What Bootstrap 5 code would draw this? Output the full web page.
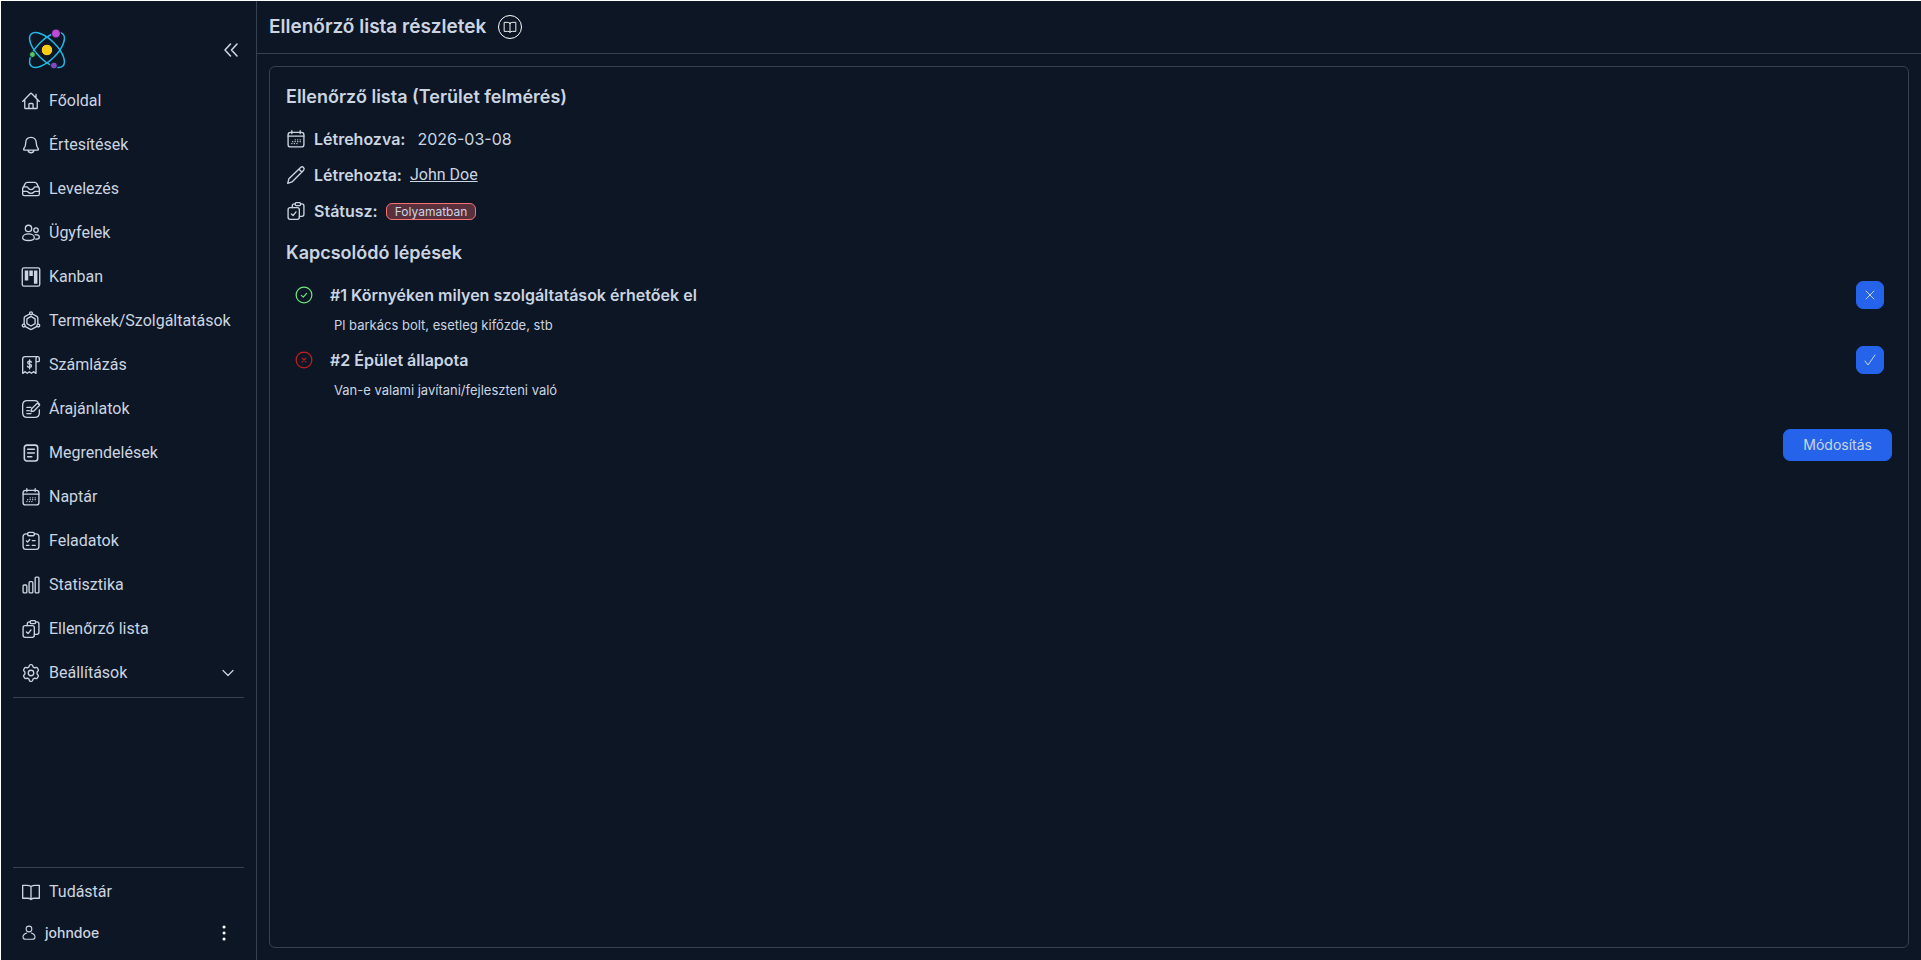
<!DOCTYPE html>
<html lang="hu" data-bs-theme="dark">
<head>
<meta charset="utf-8">
<meta name="viewport" content="width=device-width, initial-scale=1">
<title>Ellenőrző lista részletek</title>
<link href="https://cdn.jsdelivr.net/npm/bootstrap@5.3.0/dist/css/bootstrap.min.css" rel="stylesheet">
<style>
  :root { --ink: #cbd5e1; --line: #374151; --page: #0d1624; --accent: #2563eb; }
  body {
    font-family: Inter, "Liberation Sans", sans-serif; font-size: 16px; line-height: 24px;
    color: var(--ink); background: var(--page);
    border-top: 1px solid #fff; border-left: 1px solid #fff;
  }
  a { color: inherit; }
  h1, h2, h3 { color: var(--ink); }
  svg { fill: none; stroke: currentColor; stroke-width: 1.6; stroke-linecap: round; stroke-linejoin: round; flex: none; }
  .wrap { min-height: calc(100vh - 1px); }
  .ico { width: 20px; height: 20px; }
  .plain { background: none; border: 0; color: inherit; padding: 0; display: inline-flex; }
  .side { width: 256px; border-right: 1px solid var(--line); padding: 24px 12px 8px; }
  .side-head { padding: 0 5px 0 12px; height: 50px; }
  .menu-item { padding: 0 8px; height: 44px; gap: 8px; color: var(--ink); text-decoration: none; text-align: left; }
  .menu-item, .meta a { font-family: Roboto, Inter, sans-serif; }
  .rule { border-top: 1px solid var(--line); margin: 2px 0; }
  .user-row { height: 38px; padding: 0 10px 0 8px; font-size: 14px; font-weight: 500; }
  .topbar { height: 53px; padding: 0 12px; gap: 12px; border-bottom: 1px solid var(--line); }
  .topbar h1 { font-size: 19px; line-height: 28px; font-weight: 600; }
  .help-ring { width: 24px; height: 24px; border: 1px solid #fff; }
  .panel { margin: 12px; padding: 16px; border: 1px solid var(--line); border-radius: 6px; }
  .panel h2 { font-size: 18px; line-height: 28px; font-weight: 600; margin: 0 0 10px; }
  .panel .steps-title { margin: 10px 0 14px; }
  .meta { gap: 8px; height: 36px; }
  .meta strong, .step h3 { font-weight: 600; }
  .step h3 { font-size: 16px; line-height: 28px; }
  .status-chip { font-size: 12px; line-height: 15px; padding: 0 8px; border: 1px solid #f87171; border-radius: 6px; background: #5a303d; }
  .step { padding: 0 8px 0 9px; height: 65px; }
  .step-mark { width: 35px; }
  .step p { font-size: 13px; line-height: 20px; padding: 6px 0 0 4px; }
  .btn-accent { --bs-btn-bg: var(--accent); --bs-btn-border-color: var(--accent); --bs-btn-color: #cbd5e1; --bs-btn-hover-bg: #1d4ed8; --bs-btn-hover-color: #fff; border-radius: 7px; }
  .btn-square { width: 28px; height: 28px; padding: 0; }
  .panel-foot { margin-top: 18px; }
  .btn-edit { font-size: 14px; line-height: 20px; padding: 5px 19px; }
</style>
</head>
<body>
<svg class="d-none" aria-hidden="true">
  <symbol id="i-home" viewBox="0 0 24 24"><path d="M2 12.500 11 3.200q1-1 2 0l9 9.300M4.500 10.500V20q0 1 1 1h13q1 0 1-1v-9.500M9.500 21v-5q0-1 1-1h3q1 0 1 1v5M18 8V4"/></symbol>
  <symbol id="i-bell" viewBox="0 0 24 24"><path d="M12 2.800c-4 0-6.300 2.700-6.300 6.400 0 4-1 5.400-2.200 7-.8 1.100-.3 2 1 2h15c1.300 0 1.800-.9 1-2-1.200-1.600-2.200-3-2.200-7 0-3.700-2.300-6.400-6.300-6.400ZM8.500 18.500c.5 3.700 6.500 3.700 7 0"/></symbol>
  <symbol id="i-inbox" viewBox="0 0 24 24"><path d="M2 11.500 5 5.500Q5.800 4 7.500 4h9Q18.200 4 19 5.500l3 6V18q0 2-2 2H4q-2 0-2-2ZM2 11.500q0-2 2-2h2.500q1.500 0 2 1.200 1 2 3.500 2t3.500-2q.5-1.200 2-1.200H20q2 0 2 2M2 14.800h5q1 0 1.500.8 1.200 1.700 3.500 1.700t3.500-1.700q.5-.8 1.500-.8h5"/></symbol>
  <symbol id="i-users" viewBox="0 0 24 24"><circle cx="9" cy="6.500" r="3.800"/><circle cx="18" cy="8.500" r="2.700"/><path d="M9 13c-4 0-7 2-7 4.700 0 2.200 2 3.300 7 3.300s7-1.100 7-3.300C16 15 13 13 9 13Z"/><path d="M17 14c3 0 5 1.200 5 3 0 1.500-1.500 2.300-4.500 2.300"/></symbol>
  <symbol id="i-kanban" viewBox="0 0 24 24"><rect x="1.500" y="1" width="21" height="22" rx="2"/><path d="M4.500 4.200h4.200v12H4.500ZM10 4.200h4.200v6.500H10ZM15.500 4.200h4.200V20h-4.200Z" fill="currentColor" stroke="none"/></symbol>
  <symbol id="i-hex" viewBox="0 0 24 24"><circle cx="12" cy="2.800" r="1.700"/><circle cx="3.200" cy="17.500" r="1.700"/><circle cx="20.800" cy="17.500" r="1.700"/><path d="M10.300 3.600 5 6.500q-1.200.7-1.200 2v7.200M13.700 3.600 19 6.500q1.200.7 1.200 2v7.200M4.800 18.500l6 3.300q1.200.7 2.400 0l6-3.300M12 6.500l4.900 2.900v5.800L12 18l-4.900-2.800V9.400Z"/></symbol>
  <symbol id="i-bill" viewBox="0 0 24 24"><path d="M20 2H5Q2 2 2 5v17l3-2 2.500 2 2.500-2 2.500 2 2.500-2 3 2V4.500Q18 2 20 2t2 2.500V7q0 1-1 1h-3"/><path d="M12.500 8.700Q12 7.500 10.300 7.500 8 7.500 8 9.200t2.300 1.900q2.300.3 2.300 2t-2.300 1.800q-2 0-2.500-1.400M10.300 6v10.500"/></symbol>
  <symbol id="i-draft" viewBox="0 0 24 24"><path d="M21 6.500Q20.500 2 16.500 2H7.500Q2 2 2 7.500v9Q2 22 7.500 22h9q5.500 0 5.500-5.500V13M7 10h5M7 14h3"/><path d="m12 15 .7-3.300 6.500-6.200q1.300-1 2.500.1t0 2.500l-6.200 6.300ZM7 17.500h5"/></symbol>
  <symbol id="i-doc" viewBox="0 0 24 24"><rect x="4" y="2.500" width="16" height="19" rx="3" stroke-width="1.900"/><path d="M8 7.500h8M8 12h8M8 16.500h5" stroke-width="1.900"/></symbol>
  <symbol id="i-cal" viewBox="0 0 24 24"><rect x="2.500" y="4" width="19" height="17.500" rx="3"/><path d="M7 2v3.500M17 2v3.500M2.500 8.500h19M11 13h.1M14 13h.1M17 13h.1M8 15.200h.1M11 15.200h.1M14 15.200h.1M17 15.200h.1M7 17.500h.1M10 17.500h.1M13 17.500h.1"/></symbol>
  <symbol id="i-tasks" viewBox="0 0 24 24"><path d="M8 3.500H6q-3.500 0-3.500 3.500v11.500Q2.500 22 6 22h12q3.500 0 3.500-3.500V7q0-3.500-3.500-3.500h-2"/><rect x="8" y="1.700" width="8" height="4" rx="1.500"/><path d="m6.500 12 1.400 1.200 2.600-3M13.500 11.500H17M6.500 17.300h3M13.500 17.300H17"/></symbol>
  <symbol id="i-stats" viewBox="0 0 24 24"><rect x="2.500" y="12" width="4.500" height="9.500" rx="1.200"/><rect x="9.700" y="8" width="4.500" height="13.500" rx="1.200"/><rect x="17" y="2.500" width="4.500" height="19" rx="1.200"/></symbol>
  <symbol id="i-check-list" viewBox="0 0 24 24"><rect x="2.500" y="8" width="13.500" height="14" rx="2.500"/><path d="M7.500 8V6q0-2.500 2.500-2.500h1M17.500 3.500H19q2.500 0 2.500 2.500v10q0 2.500-2.500 2.500h-3M6.500 15.500l2 2 3.500-4.500"/><rect x="11" y="2" width="6.500" height="3.500" rx="1.300"/></symbol>
  <symbol id="i-gear" viewBox="0 0 24 24"><circle cx="12" cy="12" r="3.300"/><path d="M10 3.200Q10.300 2 11.500 2h1q1.200 0 1.500 1.200l.4 1.500 2 1.100 1.500-.4q1.200-.3 1.800.7l1 1.700q.6 1-.3 1.900l-1.100 1.100v2.400l1.100 1.100q.9.900.3 1.900l-1 1.700q-.6 1-1.800.7l-1.500-.4-2 1.100-.4 1.500Q13.700 22 12.500 22h-1q-1.200 0-1.500-1.200l-.4-1.500-2-1.100-1.500.4q-1.200.3-1.800-.7l-1-1.700q-.6-1 .3-1.900l1.100-1.100v-2.400L3.600 9.700Q2.700 8.800 3.300 7.800l1-1.700q.6-1 1.800-.7l1.500.4 2-1.100Z"/></symbol>
  <symbol id="i-book" viewBox="0 0 24 24"><path d="M12 5.500Q10 4 7 4H2v15.500h6q2.500 0 4 1.500 1.500-1.500 4-1.500h6V4h-5q-3 0-5 1.500ZM12 5.500V21"/></symbol>
  <symbol id="i-user" viewBox="0 0 24 24"><circle cx="12" cy="6" r="4.300"/><path d="M8.500 12C5 13.300 3 15.700 3 18q0 3.500 4 3.500h10q4 0 4-3.500c0-2.300-2-4.700-5.500-6"/></symbol>
  <symbol id="i-pen" viewBox="0 0 24 24"><path d="m2 22 1.500-5.500L17.800 2.700q1.600-1.400 3.200.2t.2 3.300L7.200 20.300ZM15.500 5l3.500 3.500"/></symbol>
  <symbol id="i-ok" viewBox="0 0 24 24"><circle cx="12" cy="12" r="10.500"/><path d="m8.500 12.500 2.500 2.300 4.500-5"/></symbol>
  <symbol id="i-no" viewBox="0 0 24 24"><circle cx="12" cy="12" r="10.500"/><path d="m9.500 9.500 5 5m0-5-5 5"/></symbol>
</svg>

<div class="d-flex wrap">
  <aside class="side d-flex flex-column flex-shrink-0">
    <div class="side-head d-flex justify-content-between mb-1">
      <svg width="44" height="48" viewBox="0 0 44 48" role="img" aria-label="Logó">
        <g stroke="#22b8e6" stroke-width="1.500">
          <ellipse cx="22" cy="25" rx="22.500" ry="10" transform="rotate(45 22 25)"/>
          <ellipse cx="22" cy="25" rx="22.500" ry="10" transform="rotate(-45 22 25)"/>
        </g>
        <g stroke="#0d1624" stroke-width="1">
          <circle cx="22" cy="25" r="5.800" fill="#facc15"/>
          <circle cx="31" cy="8.500" r="4.500" fill="#c04ad8"/>
          <circle cx="29" cy="40.500" r="3.500" fill="#7e4cc0"/>
          <circle cx="7.500" cy="29.500" r="3" fill="#4fc964"/>
        </g>
      </svg>
      <button class="plain align-self-center" aria-label="Menü összecsukása"><svg width="16" height="18" viewBox="0 0 16 18"><path d="M7.500 3 2 9l5.500 6M14 3 8.500 9l5.500 6"/></svg></button>
    </div>
    <nav class="d-flex flex-column">
      <a class="menu-item d-flex align-items-center" href="#"><svg class="ico"><use href="#i-home"/></svg>Főoldal</a>
      <a class="menu-item d-flex align-items-center" href="#"><svg class="ico"><use href="#i-bell"/></svg>Értesítések</a>
      <a class="menu-item d-flex align-items-center" href="#"><svg class="ico"><use href="#i-inbox"/></svg>Levelezés</a>
      <a class="menu-item d-flex align-items-center" href="#"><svg class="ico"><use href="#i-users"/></svg>Ügyfelek</a>
      <a class="menu-item d-flex align-items-center" href="#"><svg class="ico"><use href="#i-kanban"/></svg>Kanban</a>
      <a class="menu-item d-flex align-items-center" href="#"><svg class="ico"><use href="#i-hex"/></svg>Termékek/Szolgáltatások</a>
      <a class="menu-item d-flex align-items-center" href="#"><svg class="ico"><use href="#i-bill"/></svg>Számlázás</a>
      <a class="menu-item d-flex align-items-center" href="#"><svg class="ico"><use href="#i-draft"/></svg>Árajánlatok</a>
      <a class="menu-item d-flex align-items-center" href="#"><svg class="ico"><use href="#i-doc"/></svg>Megrendelések</a>
      <a class="menu-item d-flex align-items-center" href="#"><svg class="ico"><use href="#i-cal"/></svg>Naptár</a>
      <a class="menu-item d-flex align-items-center" href="#"><svg class="ico"><use href="#i-tasks"/></svg>Feladatok</a>
      <a class="menu-item d-flex align-items-center" href="#"><svg class="ico"><use href="#i-stats"/></svg>Statisztika</a>
      <a class="menu-item d-flex align-items-center" href="#"><svg class="ico"><use href="#i-check-list"/></svg>Ellenőrző lista</a>
      <button class="plain menu-item d-flex align-items-center"><svg class="ico"><use href="#i-gear"/></svg>Beállítások<svg class="ms-auto" width="16" height="16" viewBox="0 0 16 16"><path d="m3 5.500 5 5 5-5" stroke-width="1.200"/></svg></button>
    </nav>
    <div class="rule"></div>
    <div class="rule mt-auto"></div>
    <a class="menu-item d-flex align-items-center" href="#"><svg class="ico"><use href="#i-book"/></svg>Tudástár</a>
    <div class="user-row d-flex align-items-center gap-2">
      <svg width="16" height="16"><use href="#i-user"/></svg>johndoe
      <button class="plain ms-auto text-white" aria-label="Fiók menü"><svg width="20" height="20" viewBox="0 0 20 20"><path d="M10 4h.1M10 10h.1M10 16h.1" stroke-width="3"/></svg></button>
    </div>
  </aside>

  <main class="flex-grow-1 d-flex flex-column">
    <header class="topbar d-flex align-items-center">
      <h1 class="m-0">Ellenőrző lista részletek</h1>
      <button class="plain help-ring rounded-circle align-items-center justify-content-center text-white" aria-label="Súgó"><svg width="14" height="14"><use href="#i-book"/></svg></button>
    </header>
    <section class="panel flex-grow-1">
      <h2>Ellenőrző lista (Terület felmérés)</h2>
      <div class="meta d-flex align-items-center"><svg class="ico"><use href="#i-cal"/></svg><strong>Létrehozva:</strong><span class="ms-1">2026-03-08</span></div>
      <div class="meta d-flex align-items-center"><svg class="ico"><use href="#i-pen"/></svg><strong>Létrehozta:</strong><a href="#">John Doe</a></div>
      <div class="meta d-flex align-items-center"><svg class="ico"><use href="#i-check-list"/></svg><strong>Státusz:</strong><span class="status-chip">Folyamatban</span></div>
      <h2 class="steps-title">Kapcsolódó lépések</h2>
      <div class="step d-flex">
        <div class="step-mark"><svg width="18" height="28" color="#6ee77f"><use href="#i-ok"/></svg></div>
        <div class="flex-grow-1"><h3 class="m-0">#1 Környéken milyen szolgáltatások érhetőek el</h3><p class="m-0">Pl barkács bolt, esetleg kifőzde, stb</p></div>
        <button class="btn btn-accent btn-square d-flex align-items-center justify-content-center" aria-label="Visszavonás"><svg width="12" height="12" viewBox="0 0 12 12"><path d="m2 2 8 8m0-8-8 8" stroke-width="1"/></svg></button>
      </div>
      <div class="step d-flex">
        <div class="step-mark"><svg width="18" height="28" color="#c81e1e"><use href="#i-no"/></svg></div>
        <div class="flex-grow-1"><h3 class="m-0">#2 Épület állapota</h3><p class="m-0">Van-e valami javítani/fejleszteni való</p></div>
        <button class="btn btn-accent btn-square d-flex align-items-center justify-content-center" aria-label="Kész"><svg width="12" height="12" viewBox="0 0 12 12"><path d="m1 7 3 4 7-10" stroke-width="1"/></svg></button>
      </div>
      <div class="panel-foot d-flex justify-content-end"><button class="btn btn-accent btn-edit">Módosítás</button></div>
    </section>
  </main>
</div>
<script src="https://cdn.jsdelivr.net/npm/bootstrap@5.3.0/dist/js/bootstrap.bundle.min.js"></script>
</body>
</html>
